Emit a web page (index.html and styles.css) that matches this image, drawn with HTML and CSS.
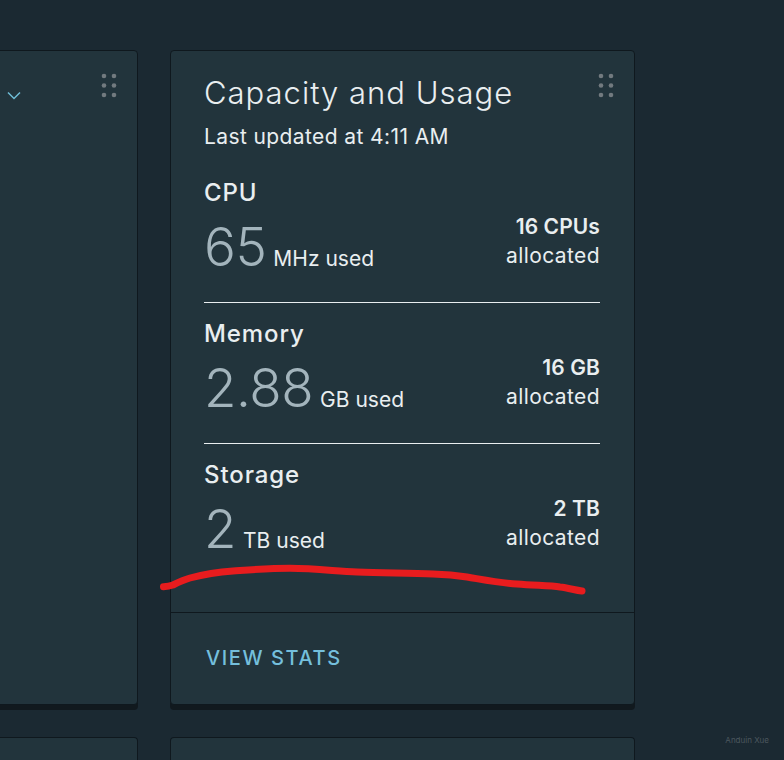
FILE: index.html
```html
<!DOCTYPE html>
<html lang="en">
<head>
<meta charset="utf-8">
<title>Capacity and Usage</title>
<link rel="stylesheet" href="styles.css">
</head>
<body>
<main class="grid">
  <section class="card card-left">
    <div class="card-body">
      <svg class="grip" viewBox="0 0 16 24" aria-hidden="true"><g><circle cx="3" cy="2.500" r="2.300"/><circle cx="13" cy="2.500" r="2.300"/><circle cx="3" cy="12" r="2.300"/><circle cx="13" cy="12" r="2.300"/><circle cx="3" cy="21.500" r="2.300"/><circle cx="13" cy="21.500" r="2.300"/></g></svg>
      <svg class="chevron" viewBox="0 0 14 9" aria-hidden="true"><path d="M1 1.500 7 7.500 13 1.500"/></svg>
    </div>
  </section>
  <section class="card">
    <div class="card-body">
      <svg class="grip" viewBox="0 0 16 24" aria-hidden="true"><g><circle cx="3" cy="2.500" r="2.300"/><circle cx="13" cy="2.500" r="2.300"/><circle cx="3" cy="12" r="2.300"/><circle cx="13" cy="12" r="2.300"/><circle cx="3" cy="21.500" r="2.300"/><circle cx="13" cy="21.500" r="2.300"/></g></svg>
      <h2 class="title">Capacity and Usage</h2>
      <p class="updated">Last updated at 4:11 AM</p>
      <div class="metric">
        <h3 class="metric-name">CPU</h3>
        <div class="metric-row">
          <div class="used"><span class="value">65</span><span class="unit">MHz used</span></div>
          <div class="alloc"><strong>16 CPUs</strong><span>allocated</span></div>
        </div>
      </div>
      <div class="metric">
        <h3 class="metric-name">Memory</h3>
        <div class="metric-row">
          <div class="used"><span class="value">2.88</span><span class="unit">GB used</span></div>
          <div class="alloc"><strong>16 GB</strong><span>allocated</span></div>
        </div>
      </div>
      <div class="metric metric-last">
        <h3 class="metric-name">Storage</h3>
        <div class="metric-row">
          <div class="used"><span class="value">2</span><span class="unit">TB used</span></div>
          <div class="alloc"><strong>2 TB</strong><span>allocated</span></div>
        </div>
      </div>
    </div>
    <div class="card-footer"><a class="link" href="#">VIEW STATS</a></div>
    <svg class="scribble" viewBox="0 0 440 40" aria-hidden="true"><path d="M3.500 28.700C7 28.500 10 28 13 27C18 24.500 23 22 30 20C45 16 58 14 73 13C95 11.500 110 10.300 130 10.300C155 10.500 175 13 197 14C225 15 250 15 273 16C287 16.500 297 17.500 307 19C325 22 340 25 357 26C375 27.500 390 27.500 400 29C408 30 415 32 422 33"/></svg>
  </section>
  <section class="card card-next"></section>
  <section class="card card-next"></section>
</main>
<footer class="credit">Anduin Xue</footer>
</body>
</html>
```
FILE: styles.css
```css
html, body {
  margin: 0;
  height: 760px;
  overflow: hidden;
}
body {
  background: #1b2932;
  color: #e9eef0;
  font-family: Inter, "Open Sans", sans-serif;
  position: relative;
}
.grid {
  display: grid;
  grid-template-columns: 465px 465px;
  grid-template-rows: 655px 23px;
  column-gap: 32px;
  row-gap: 32px;
  margin-left: -327px;
  padding-top: 50px;
}
.card {
  position: relative;
  display: flex;
  flex-direction: column;
  box-sizing: border-box;
  background: #22343c;
  border: 1px solid #0f181e;
  border-radius: 4px;
  box-shadow: 0 5px 0 #11191e;
}
.card-next {
  border-bottom: 0;
  border-radius: 4px 4px 0 0;
  box-shadow: none;
}
.card-body {
  position: relative;
  flex: 1;
  padding: 24px 34px 0 33px;
}
.grip {
  position: absolute;
  top: 22px;
  right: 20px;
  width: 16px;
  height: 25px;
  fill: #727a7f;
}
.chevron {
  position: absolute;
  top: 40px;
  right: 116px;
  width: 14px;
  height: 9px;
  fill: none;
  stroke: #6fbcd6;
  stroke-width: 1.500;
}
.title {
  margin: 0;
  font-size: 31px;
  font-weight: 300;
  line-height: 36px;
  letter-spacing: 1px;
}
.updated {
  margin: 13px 0 0;
  font-size: 21px;
  font-weight: 400;
  line-height: 26px;
  letter-spacing: 0.400px;
}
.metric {
  padding: 30px 0 25px;
  border-bottom: 1px solid #e9eef0;
}
.metric + .metric {
  padding-top: 18px;
}
.metric-last {
  border-bottom: 0;
}
.metric-name {
  margin: 0 0 11px;
  font-size: 24px;
  font-weight: 500;
  line-height: 26px;
  letter-spacing: 0.900px;
}
.metric-row {
  display: flex;
  justify-content: space-between;
  align-items: flex-start;
}
.used {
  display: flex;
  align-items: baseline;
}
.value {
  color: #a3b4bc;
  font-size: 53px;
  font-weight: 350;
  line-height: 60px;
  letter-spacing: -0.500px;
}
.unit {
  margin-left: 7px;
  font-size: 21px;
  line-height: 26px;
}
.alloc {
  display: flex;
  flex-direction: column;
  align-items: flex-end;
  margin-top: -5px;
  font-size: 21px;
  line-height: 29px;
  letter-spacing: 0.400px;
}
.alloc strong {
  font-weight: 600;
  letter-spacing: 0.100px;
}
.card-footer {
  height: 92px;
  box-sizing: border-box;
  border-top: 1px solid #0f181e;
  padding: 32px 35px 0;
}
.link {
  color: #74bfdc;
  font-size: 20px;
  font-weight: 500;
  line-height: 26px;
  letter-spacing: 1.600px;
  text-decoration: none;
}
.scribble {
  position: absolute;
  left: -11px;
  top: 507px;
  width: 440px;
  height: 40px;
  fill: none;
  stroke: #e81c1e;
  stroke-width: 7;
  stroke-linecap: round;
  stroke-linejoin: round;
}
.credit {
  position: absolute;
  right: 15px;
  top: 734px;
  color: #4c575e;
  font-size: 8px;
  line-height: 12px;
}
```
